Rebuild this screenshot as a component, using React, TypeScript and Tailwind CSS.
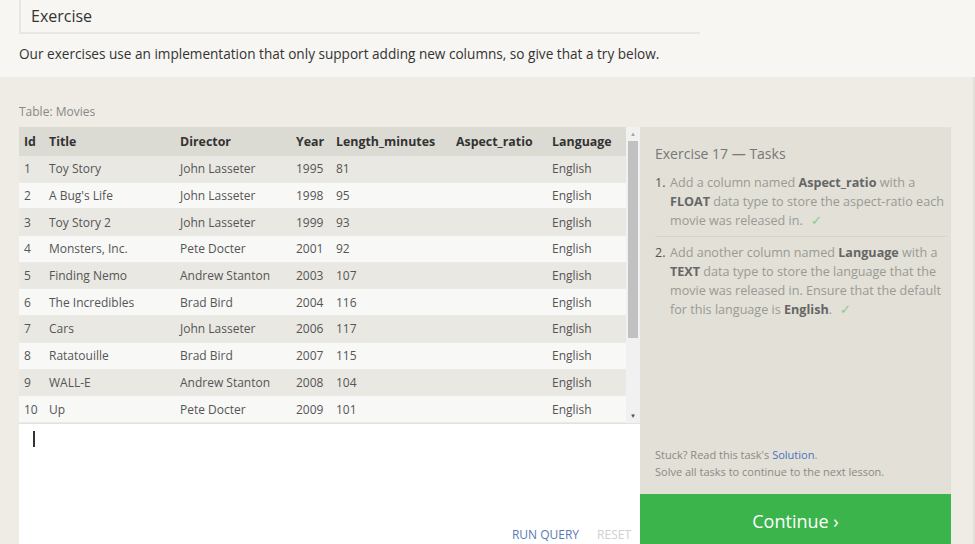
const rows = [
  [1, "Toy Story", "John Lasseter", 1995, 81],
  [2, "A Bug's Life", "John Lasseter", 1998, 95],
  [3, "Toy Story 2", "John Lasseter", 1999, 93],
  [4, "Monsters, Inc.", "Pete Docter", 2001, 92],
  [5, "Finding Nemo", "Andrew Stanton", 2003, 107],
  [6, "The Incredibles", "Brad Bird", 2004, 116],
  [7, "Cars", "John Lasseter", 2006, 117],
  [8, "Ratatouille", "Brad Bird", 2007, 115],
  [9, "WALL-E", "Andrew Stanton", 2008, 104],
  [10, "Up", "Pete Docter", 2009, 101],
];

const cols = "grid grid-cols-[25px_131px_116px_40px_120px_96px_79px]";

const Check = () => <span className="ml-2 text-[#8fc98f]">✓</span>;

export default function App() {
  return (
    <div className="h-[544px] w-[975px] overflow-hidden bg-[#eeece5] font-['Open_Sans',sans-serif]">
      {/* lesson text */}
      <div className="h-[77px] bg-[#f7f6f2] px-[19px]">
        <div className="flex h-[34px] w-[681px] items-center border-b-2 border-l-2 border-[#e9e7e0] pl-[10px] text-[16px] text-[#333]">
          Exercise
        </div>
        <p className="mt-[10px] text-[13.6px] text-[#333]">
          Our exercises use an implementation that only support adding new columns, so give that a try below.
        </p>
      </div>

      {/* exercise area */}
      <div className="border-r-2 border-[#e2e0da] px-[19px] pt-[26px]">
        <div className="mb-[6px] text-[12px] text-[#888]">Table: Movies</div>
        <div className="flex">
          {/* left: table + editor */}
          <div className="flex h-[418px] w-[621px] flex-col bg-white">
            <div className="flex h-[296px]">
              <div className="w-[607px]">
                <div className={`${cols} h-[29px] items-center bg-[#dcdbd3] pt-[2px] text-[12.4px] font-bold text-[#333]`}>
                  <div className="pl-[5px]">Id</div>
                  <div className="pl-[5px]">Title</div>
                  <div className="pl-[5px]">Director</div>
                  <div className="pl-[5px]">Year</div>
                  <div className="pl-[5px]">Length_minutes</div>
                  <div className="pl-[5px]">Aspect_ratio</div>
                  <div className="pl-[5px]">Language</div>
                </div>
                {rows.map((r, i) => (
                  <div
                    key={r[0]}
                    className={`${cols} h-[26.7px] items-center border-b border-[#eceae4] pt-[1px] text-[12px] text-[#555] ${
                      i % 2 === 0 ? "bg-[#e9e8e2]" : "bg-[#f8f8f7]"
                    }`}
                  >
                    <div className="pl-[5px]">{r[0]}</div>
                    <div className="pl-[5px]">{r[1]}</div>
                    <div className="pl-[5px]">{r[2]}</div>
                    <div className="pl-[5px]">{r[3]}</div>
                    <div className="pl-[5px]">{r[4]}</div>
                    <div className="pl-[5px]"></div>
                    <div className="pl-[5px]">English</div>
                  </div>
                ))}
              </div>
              {/* scrollbar */}
              <div className="flex w-[14px] flex-col items-center bg-[#f1f1f1]">
                <div className="flex h-[14px] items-center text-[6px] text-[#a3a3a3]">▲</div>
                <div className="h-[197px] w-[10px] bg-[#c1c1c1]" />
                <div className="flex-1" />
                <div className="flex h-[14px] items-center text-[6px] text-[#505050]">▼</div>
              </div>
            </div>
            <div className="relative flex-1 border-t border-[#e4e2dc]">
              <div className="absolute left-[14px] top-[7px] h-[16px] w-[2px] bg-[#333]" />
              <div className="absolute bottom-[1px] right-[9px] flex gap-[18px] text-[12px]">
                <span className="text-[#5a7ab6]">RUN QUERY</span>
                <span className="text-[#d0d0d0]">RESET</span>
              </div>
            </div>
          </div>

          {/* right: tasks */}
          <div className="flex h-[418px] w-[311px] flex-col">
            <div className="flex flex-1 flex-col bg-[#e2e0d7] pl-[15px] pr-[4px] pt-[16px]">
              <div className="text-[14px] text-[#777]">Exercise 17 — Tasks</div>
              <ol className="mt-[9px] text-[12.6px] leading-[19px] text-[#9a9a94]">
                <li className="flex border-b border-[#d6d4cb] pb-[6px]">
                  <span className="w-[15px] shrink-0 text-[#555]">1.</span>
                  <span>
                    Add a column named <b className="text-[#666]">Aspect_ratio</b> with a{" "}
                    <b className="text-[#666]">FLOAT</b> data type to store the aspect-ratio each movie was released in.
                    <Check />
                  </span>
                </li>
                <li className="flex pt-[6px]">
                  <span className="w-[15px] shrink-0 text-[#555]">2.</span>
                  <span>
                    Add another column named <b className="text-[#666]">Language</b> with a{" "}
                    <b className="text-[#666]">TEXT</b> data type to store the language that the movie was released in.
                    Ensure that the default for this language is <b className="text-[#666]">English</b>.
                    <Check />
                  </span>
                </li>
              </ol>
              <div className="mt-auto pb-[14px] text-[11px] leading-[17px] text-[#8a8a86]">
                <div>
                  Stuck? Read this task's <span className="text-[#4a70c0]">Solution</span>.
                </div>
                <div>Solve all tasks to continue to the next lesson.</div>
              </div>
            </div>
            <div className="flex h-[51px] items-center justify-center bg-[#3bb44b] pt-[4px] text-[18px] text-white">
              Continue ›
            </div>
          </div>
        </div>
      </div>
    </div>
  );
}
